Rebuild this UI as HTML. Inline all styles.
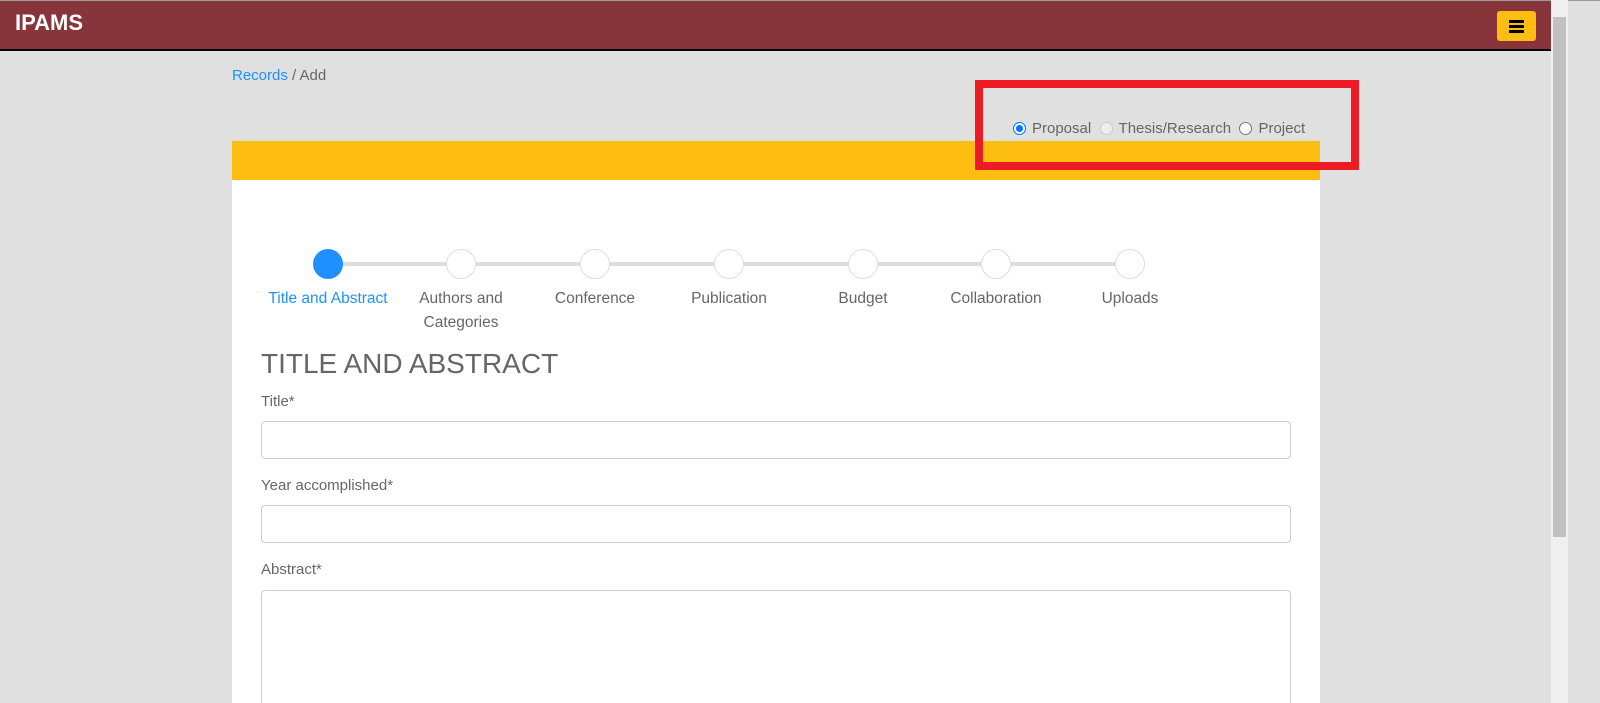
<!DOCTYPE html>
<html><head><style>
*{box-sizing:border-box;margin:0;padding:0}
html,body{width:1600px;height:703px;overflow:hidden}
body{background:#e0e0e0;font-family:"Liberation Sans",sans-serif;position:relative;color:#666}
.hdr{position:absolute;left:0;top:1px;width:1551px;height:50px;background:#88343b;border-bottom:2px solid #000}
.topline{position:absolute;left:0;top:0;width:1600px;height:1px;background:#999}
.logo{position:absolute;left:15px;top:9px;color:#fff;font-weight:bold;font-size:22px}
.burger{position:absolute;left:1497px;top:10px;width:39px;height:30px;background:#fdbe11;border-radius:3px}
.burger i{position:absolute;left:12px;width:15px;height:3px;background:#000}
.sb{position:absolute;left:1551px;top:0;width:17px;height:703px;background:#f0f0f0}
.thumb{position:absolute;left:1553px;top:17px;width:13px;height:520px;background:#c1c1c1}
.crumb{position:absolute;left:232px;top:67px;font-size:15px;color:#666}
.crumb a{color:#1e90ff;text-decoration:none}
.yb{position:absolute;left:232px;top:141px;width:1088px;height:39px;background:#fdbe11}
.card{position:absolute;left:232px;top:180px;width:1088px;height:523px;background:#fff}
.red{position:absolute;left:975px;top:80px;width:384px;height:90px;border:8px solid #ed1c24}
.radios{position:absolute;left:1013px;top:120px;font-size:15px;color:#666;display:flex;align-items:center}
.rb{width:13px;height:13px;border-radius:50%;border:1px solid #767676;background:#fff;display:inline-block;margin-right:6px;position:relative}
.rb.on{border-color:#0075ff}
.rb.on:after{content:"";position:absolute;left:2px;top:2px;width:7px;height:7px;border-radius:50%;background:#0075ff}
.rb.dis{border-color:#ccc;background:#eee}
.line{position:absolute;top:262px;height:4px;background:#ddd;left:328px;width:802px}
.c{position:absolute;top:249px;width:30px;height:30px;border-radius:50%;background:#fff;border:1px solid #ddd}
.c.on{background:#1e90ff;border-color:#1e90ff}
.lb{position:absolute;top:287px;width:134px;text-align:center;font-size:15.5px;line-height:24px;color:#666}
h2{position:absolute;left:261px;top:348px;font-size:28px;font-weight:normal;color:#666}
.l{position:absolute;left:261px;font-size:15px;color:#666}
.in{position:absolute;left:261px;width:1030px;height:38px;border:1px solid #ccc;border-radius:4px;background:#fff}
</style></head><body>
<div class="topline"></div>
<div class="hdr"><div class="logo">IPAMS</div><div class="burger"><i style="top:9px"></i><i style="top:14px"></i><i style="top:19px"></i></div></div>
<div class="sb"></div><div class="thumb"></div>
<div class="crumb"><a>Records</a> / Add</div>
<div class="yb"></div>
<div class="card"></div>
<div class="red"></div>
<div class="radios"><span class="rb on"></span>Proposal&nbsp;&nbsp;<span class="rb dis"></span>Thesis/Research&nbsp;&nbsp;<span class="rb"></span>Project</div>
<div class="line"></div>
<div class="c on" style="left:313px"></div>
<div class="c" style="left:446px"></div>
<div class="c" style="left:580px"></div>
<div class="c" style="left:714px"></div>
<div class="c" style="left:848px"></div>
<div class="c" style="left:981px"></div>
<div class="c" style="left:1115px"></div>
<div class="lb" style="left:261px;color:#1e90ff">Title and Abstract</div>
<div class="lb" style="left:394px">Authors and<br>Categories</div>
<div class="lb" style="left:528px">Conference</div>
<div class="lb" style="left:662px">Publication</div>
<div class="lb" style="left:796px">Budget</div>
<div class="lb" style="left:929px">Collaboration</div>
<div class="lb" style="left:1063px">Uploads</div>
<h2>TITLE AND ABSTRACT</h2>
<div class="l" style="top:393px">Title*</div>
<div class="in" style="top:421px"></div>
<div class="l" style="top:477px">Year accomplished*</div>
<div class="in" style="top:505px"></div>
<div class="l" style="top:561px">Abstract*</div>
<div class="in" style="top:590px;height:130px"></div>
</body></html>
